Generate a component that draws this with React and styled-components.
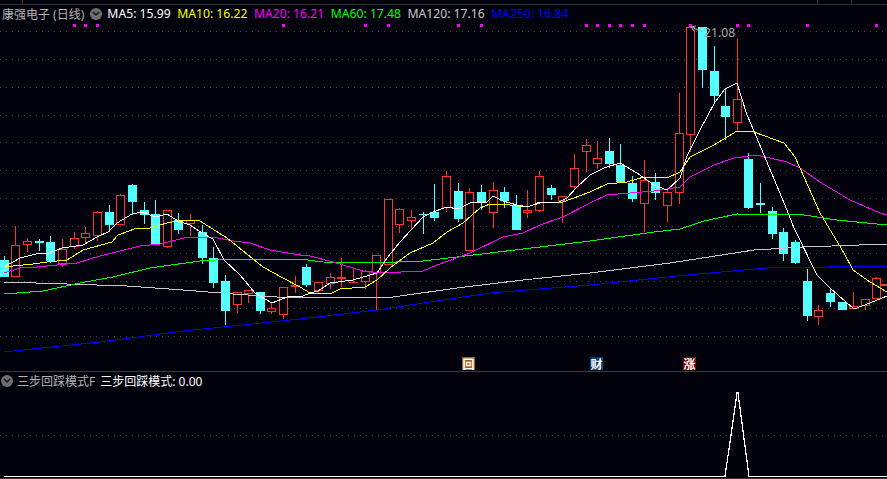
import React from "react";
import styled, { createGlobalStyle } from "styled-components";

const Global = createGlobalStyle`
  html, body { margin: 0; padding: 0; background: #02020c; overflow: hidden; }
`;

const font = `Tahoma, "Noto Sans", "Noto Sans CJK SC", sans-serif`;

const Page = styled.div`
  width: 887px;
  height: 479px;
  display: grid;
  grid-template-rows: 5px 366px 108px;
  background: #02020c;
  font-family: ${font};
`;

const TopStrip = styled.div`
  box-sizing: border-box;
  height: 5px;
  border-bottom: 1px solid #333;
  display: flex;
`;

const StripCell = styled.div`
  width: ${(p) => p.$w}px;
  border-right: 1px solid #333;
  box-sizing: border-box;
`;

const Panel = styled.section`
  position: relative;
  overflow: hidden;
`;

const SubPanel = styled(Panel)`
  border-top: 1px solid #3a3a3a;
  border-bottom: 1px solid #333;
`;

const Legend = styled.div`
  position: absolute;
  top: 0;
  left: 0;
  display: flex;
  align-items: center;
  height: 17px;
  padding-left: ${(p) => p.$pad}px;
  font-size: 12.2px;
  white-space: nowrap;
`;

const Title = styled.span`
  color: #b4b4b4;
  font-size: 12px;
  margin-right: 6px;
`;

const Toggle = styled.span`
  width: 12px;
  height: 12px;
  border-radius: 50%;
  background: #6e6e6e;
  display: inline-flex;
  align-items: center;
  justify-content: center;
  flex: none;
`;

const Value = styled.span`
  color: ${(p) => p.$color};
  margin-left: ${(p) => p.$gap}px;
`;

const SubValue = styled.span`
  color: ${(p) => p.$color};
  font-size: 12px;
  margin-left: ${(p) => p.$gap}px;
`;

const Chart = styled.svg`
  position: absolute;
  inset: 0;
  display: block;
`;

const Badge = styled.span`
  position: absolute;
  left: ${(p) => p.$x}px;
  top: 352px;
  width: 13px;
  height: 13px;
  background: ${(p) => p.$bg};
  color: #fff;
  font-size: 12px;
  font-weight: 700;
  line-height: 13px;
  text-align: center;
  font-family: "Noto Sans CJK SC", sans-serif;
`;

const HighLabel = styled.span`
  position: absolute;
  left: 704px;
  top: 19px;
  color: #a8a8a8;
  font-size: 12.2px;
`;

const Chevron = () => (
  <svg width="8" height="6" viewBox="0 0 8 6">
    <path d="M1 1 L4 4 L7 1" fill="none" stroke="#111" strokeWidth="1.5" />
  </svg>
);

// [type c=cyan r=red, x, bodyTop, bodyBottom, wickTop, wickBottom] page coordinates
const candles = [
  ["c",4,260,277,256,277],["r",15,245,277,226,277],["r",27,241,245,238,252],["c",39,241,243,239,251],
  ["c",50,242,261,236,263],["r",62,249,264,239,267],["r",74,238,247,232,249],["r",85,233,238,227,244],
  ["r",97,212,236,211,241],["c",109,212,225,205,232],["r",120,195,225,194,225],["c",132,185,202,184,215],
  ["c",144,210,215,202,224],["c",155,214,245,200,245],["r",167,210,247,210,248],["c",178,220,230,213,234],
  ["r",190,220,224,214,236],["c",202,232,258,225,264],["c",213,258,283,247,288],["c",225,281,311,275,325],
  ["r",237,292,305,292,313],["r",248,290,294,290,303],["c",260,292,311,292,314],["r",271,308,312,303,314],
  ["r",283,287,315,287,319],["r",295,285,287,276,293],["c",306,267,285,264,287],["r",318,282,291,282,293],
  ["r",330,277,284,273,289],["rf",341,277,279,258,287],["rf",353,282,283,268,283],["r",365,271,282,270,289],
  ["r",376,255,273,255,310],["r",388,199,265,199,265],["r",399,209,225,208,233],["r",411,217,221,210,229],
  ["c",423,214,215,212,234],["c",434,212,218,184,221],["r",446,176,208,171,212],["c",458,191,219,183,222],
  ["r",469,192,251,188,251],["c",481,192,203,185,210],["r",493,190,213,182,228],["c",504,192,201,187,208],
  ["c",516,206,230,195,230],["r",527,210,213,190,218],["r",539,176,211,171,212],["c",551,188,195,185,200],
  ["r",562,196,201,196,223],["r",574,168,187,154,189],["r",586,145,152,139,172],["r",597,158,164,141,169],
  ["c",609,151,164,138,168],["c",620,165,182,144,183],["c",632,183,199,176,202],["r",644,180,204,160,232],
  ["c",655,182,193,173,200],["r",667,192,206,188,222],["r",679,133,193,93,204],["r",690,27,135,27,152],
  ["c",702,27,70,27,88],["c",714,71,96,46,102],["c",725,106,117,88,140],["r",737,99,123,39,132],
  ["c",748,159,208,153,209],["c",760,203,205,183,213],["c",772,211,234,207,239],["c",783,232,254,228,261],
  ["c",795,242,263,240,264],["c",807,281,316,269,321],["r",818,310,317,305,325],["c",830,293,302,288,307],
  ["c",842,302,310,302,310],["r",853,306,309,292,309],["r",865,299,306,299,310],["r",876,278,299,277,299],
  ["rf",885,284,286,284,286],
];

const lines = {
  ma120: ["#c8c8c8","4,282 67,284 127,286 183,290 233,294 277,297 300,297 393,297 457,288 523,280 590,273 670,263 754,250 804,247 887,244"],
  ma250: ["#0000ff","4,352 100,342 183,331 233,326 300,319 377,310 490,293 590,285 687,275 767,268 887,266"],
  ma60: ["#00ff00","4,294 43,291 80,283 113,277 150,268 200,261 233,259 300,259 323,262 370,263 423,261 457,257 523,249 590,241 654,232 680,229 704,221 737,214 804,215 837,220 887,225"],
  ma20: ["#ff00ff","4,273 20,268 37,267 57,265 77,263 100,256 140,246 160,244 188,237 213,237 233,241 250,243 270,250 300,255 310,256 333,262 363,271 380,273 423,271 437,265 470,253 503,237 523,233 540,225 563,217 590,203 607,195 630,193 654,191 680,187 690,177 714,165 734,158 757,155 787,162 800,168 820,182 850,200 880,213 887,215"],
  ma10: ["#ffff00","4,267 13,266 33,264 47,262 67,260 83,250 112,242 118,235 137,228 150,228 167,223 183,220 200,221 227,238 263,267 283,278 300,287 310,293 332,293 340,289 365,287 377,280 390,268 410,253 433,243 447,232 463,223 480,208 490,204 510,205 527,207 543,202 563,202 590,192 607,184 627,182 644,177 667,178 680,172 690,157 714,145 737,131 754,132 784,143 795,157 804,177 820,213 844,253 853,270 870,282 887,292"],
  ma5: ["#ffffff","4,267 20,258 40,253 50,253 62,248 83,245 97,237 108,232 117,223 132,214 143,212 155,217 167,214 178,221 190,225 202,233 213,239 224,260 240,275 255,293 272,303 287,297 303,296 310,293 318,291 330,283 353,280 377,273 387,258 400,242 423,217 433,212 447,207 458,209 470,203 487,202 493,196 503,201 517,205 528,207 540,202 557,203 567,198 577,187 590,175 604,168 620,163 637,173 654,185 667,190 680,178 687,156 700,130 715,102 725,89 737,83 747,115 754,131 769,167 787,210 794,228 817,275 830,288 854,309 870,303 887,296"],
};

const grid = [31,59,87,115,142,170,198,226,253,281,308,336];
const dots = [73,84,96,282,364,387,457,480,585,596,608,619,631,643,689,736,747,806,875];
const RED = "#ff3232";
const CYAN = "#54ffff";

const Candle = ({ c }) => {
  const [t, x, bt, bb, wt, wb] = c;
  const color = t === "c" ? CYAN : RED;
  return (
    <g shapeRendering="crispEdges">
      <rect x={x} y={wt} width="1" height={Math.max(wb - wt, 1)} fill={color} />
      {t === "c" && <rect x={x - 4} y={bt} width="9" height={bb - bt} fill={CYAN} />}
      {t === "r" && <rect x={x - 4 + 0.5} y={bt + 0.5} width="8" height={bb - bt - 1} fill="#02020c" stroke={RED} strokeWidth="1" />}
      {t === "rf" && <rect x={x - 4} y={bt} width="9" height={bb - bt} fill={RED} />}
    </g>
  );
};

const MainChart = () => (
  <Chart width="887" height="366" viewBox="0 5 887 366">
    {grid.map((y) => (
      <line key={y} x1="0" x2="887" y1={y + 0.5} y2={y + 0.5} stroke="#4a4a4a" strokeDasharray="1 5" />
    ))}
    {dots.map((x) => (
      <rect key={x} x={x} y="24" width="3" height="3" fill="#ff00ff" shapeRendering="crispEdges" />
    ))}
    {candles.map((c) => <Candle key={c[1]} c={c} />)}
    {Object.entries(lines).map(([k, [color, pts]]) => (
      <polyline key={k} points={pts} fill="none" stroke={color} strokeWidth="1" shapeRendering="crispEdges" />
    ))}
    <path d="M691 27 L703 32 M691 27 L696 26 M691 27 L694 31" fill="none" stroke="#a8a8a8" strokeWidth="1" />
  </Chart>
);

const SubChart = () => (
  <Chart width="887" height="106" viewBox="0 372 887 106">
    <line x1="0" x2="887" y1="435.5" y2="435.5" stroke="#4a4a4a" strokeDasharray="1 5" />
    <polyline points="4,476.5 725,476.5 737,393 738,393 749,476.5 887,476.5" fill="none" stroke="#fff" strokeWidth="1.25" shapeRendering="crispEdges" />
  </Chart>
);

export default function App() {
  return (
    <Page>
      <Global />
      <TopStrip>
        <StripCell $w={23} />
        <StripCell $w={795} />
        <StripCell $w={34} />
      </TopStrip>
      <Panel>
        <MainChart />
        <Legend $pad={2}>
          <Title>康强电子 (日线)</Title>
          <Toggle><Chevron /></Toggle>
          <Value $color="#ffffff" $gap={5}>MA5: 15.99</Value>
          <Value $color="#ffff00" $gap={6.4}>MA10: 16.22</Value>
          <Value $color="#ff00ff" $gap={6.4}>MA20: 16.21</Value>
          <Value $color="#00ff00" $gap={6.4}>MA60: 17.48</Value>
          <Value $color="#c8c8c8" $gap={6.4}>MA120: 17.16</Value>
          <Value $color="#0000ff" $gap={6.4}>MA250: 16.84</Value>
        </Legend>
        <HighLabel>21.08</HighLabel>
        <Badge $x={462} $bg="#a85a14">回</Badge>
        <Badge $x={590} $bg="#0a3c6e">财</Badge>
        <Badge $x={683} $bg="#7c0000">涨</Badge>
      </Panel>
      <SubPanel>
        <SubChart />
        <Legend $pad={1}>
          <Toggle><Chevron /></Toggle>
          <SubValue $color="#b4b4b4" $gap={4}>三步回踩模式F</SubValue>
          <SubValue $color="#ffffff" $gap={5}>三步回踩模式: 0.00</SubValue>
        </Legend>
      </SubPanel>
    </Page>
  );
}
